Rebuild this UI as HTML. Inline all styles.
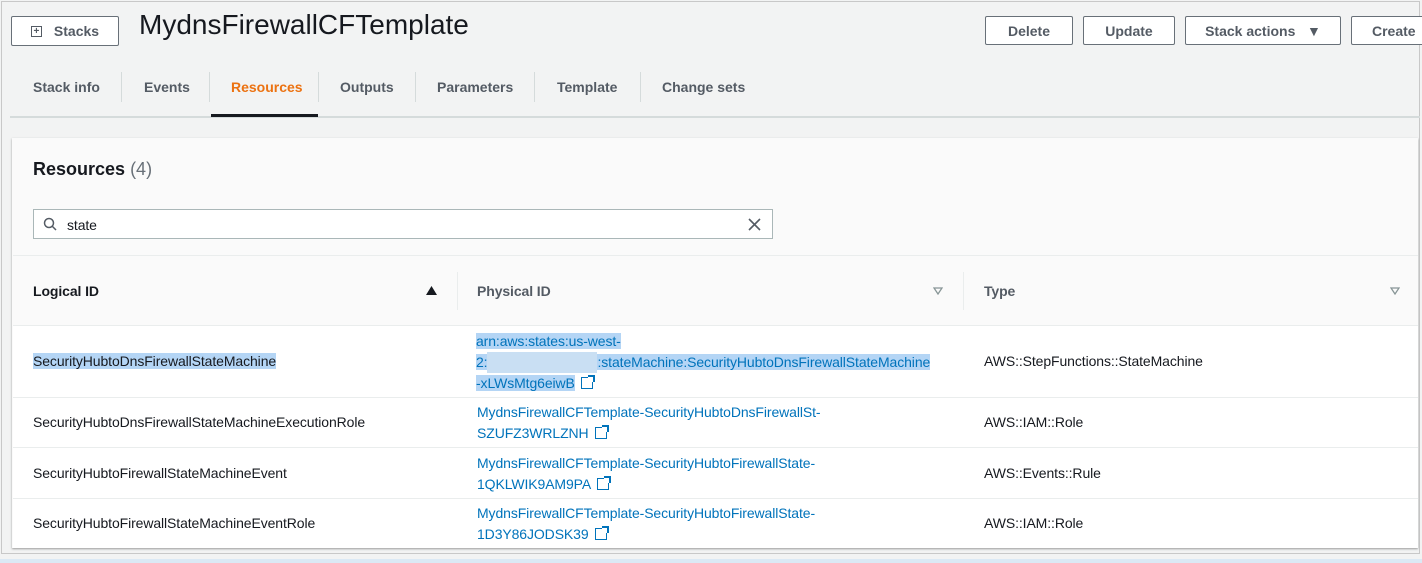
<!DOCTYPE html><html><head><style>
body{margin:0;width:1422px;height:563px;background:#f2f3f3;font-family:"Liberation Sans",sans-serif;color:#16191f;position:relative;overflow:hidden}
.a{position:absolute}
.btn{position:absolute;top:16px;height:29px;border:1px solid #687078;border-radius:2px;background:#fff;font-weight:bold;font-size:14px;color:#545b64;box-sizing:border-box;display:flex;align-items:center;justify-content:center}
.tab{position:absolute;top:79px;font-size:14px;font-weight:bold;color:#545b64}
.sep{position:absolute;top:72px;width:1px;height:30px;background:#d5dbdb}
.t{position:absolute;font-size:14px;color:#16191f;letter-spacing:-0.1px}
.l{position:absolute;font-size:14px;color:#0073bb;line-height:21px;letter-spacing:-0.1px}
.hl{background:#b4d5f5}
.ext{display:inline-block;width:10px;height:10px;border:1.5px solid #0073bb;margin-left:6px;vertical-align:-1px;position:relative}
.ext:after{content:"";position:absolute;right:-3px;top:-3px;width:7px;height:7px;background:#fff;border-top:2px solid #0073bb;border-right:2px solid #0073bb;box-sizing:border-box}
.rl{position:absolute;left:13px;width:1405px;height:1px;background:#eaeded}
</style></head><body>
<div class="a" style="left:1px;top:1px;width:1419px;height:553px;border:1px solid #c8c8c8;box-sizing:border-box"></div>
<div class="btn" style="left:11px;width:108px;height:30px;top:16px"><span style="display:inline-block;width:9px;height:9px;border:1.5px solid #545b64;font-size:10px;line-height:9px;text-align:center;margin-right:12px">+</span>Stacks</div>
<div class="a" style="left:139px;top:9px;font-size:28px;color:#16191f">MydnsFirewallCFTemplate</div>
<div class="btn" style="left:985px;width:88px">Delete</div>
<div class="btn" style="left:1083px;width:92px">Update</div>
<div class="btn" style="left:1185px;width:156px">Stack actions &nbsp;&nbsp;▼</div>
<div class="btn" style="left:1351px;width:90px;justify-content:flex-start;padding-left:20px">Create</div>
<div class="tab" style="left:33px">Stack info</div><div class="sep" style="left:121px"></div>
<div class="tab" style="left:144px">Events</div><div class="sep" style="left:209px"></div>
<div class="tab" style="left:231px;color:#ec7211">Resources</div><div class="sep" style="left:318px"></div>
<div class="tab" style="left:340px">Outputs</div><div class="sep" style="left:415px"></div>
<div class="tab" style="left:437px">Parameters</div><div class="sep" style="left:534px"></div>
<div class="tab" style="left:557px">Template</div><div class="sep" style="left:640px"></div>
<div class="tab" style="left:662px">Change sets</div>
<div class="a" style="left:10px;top:116px;width:1410px;height:2px;background:#d5dbdb"></div>
<div class="a" style="left:211px;top:114px;width:107px;height:3px;background:#16191f"></div>
<div class="a" style="left:12px;top:138px;width:1406px;height:410px;background:#fafafa;box-shadow:0 1px 2px #999"></div>
<div class="a" style="left:33px;top:159px;font-size:18px;font-weight:bold">Resources <span style="font-weight:normal;color:#687078">(4)</span></div>
<div class="a" style="left:33px;top:209px;width:740px;height:30px;background:#fff;border:1px solid #aab7b8;box-sizing:border-box"></div>
<svg class="a" style="left:43px;top:217px" width="14" height="14"><circle cx="6" cy="6" r="4.5" fill="none" stroke="#545b64" stroke-width="1.5"/><line x1="9" y1="9" x2="13" y2="13" stroke="#545b64" stroke-width="1.5"/></svg>
<div class="t" style="left:67px;top:217px;font-size:14px">state</div>
<svg class="a" style="left:748px;top:218px" width="13" height="13"><path d="M1 1L12 12M12 1L1 12" stroke="#545b64" stroke-width="1.6"/></svg>
<div class="rl" style="top:255px"></div>
<div class="t" style="left:33px;top:283px;font-weight:bold">Logical ID</div>
<svg class="a" style="left:426px;top:286px" width="11" height="9"><path d="M0 9L5.5 0L11 9Z" fill="#16191f"/></svg>
<div class="a" style="left:457px;top:272px;width:1px;height:38px;background:#eaeded"></div>
<div class="t" style="left:477px;top:283px;font-weight:bold;color:#545b64">Physical ID</div>
<svg class="a" style="left:933px;top:287px" width="10" height="8"><path d="M1 1H9L5 7Z" fill="none" stroke="#879596" stroke-width="1.3"/></svg>
<div class="a" style="left:963px;top:272px;width:1px;height:38px;background:#eaeded"></div>
<div class="t" style="left:984px;top:283px;font-weight:bold;color:#545b64">Type</div>
<svg class="a" style="left:1390px;top:287px" width="10" height="8"><path d="M1 1H9L5 7Z" fill="none" stroke="#879596" stroke-width="1.3"/></svg>
<div class="a" style="left:13px;top:325px;width:1405px;height:223px;background:#fff"></div>
<div class="rl" style="top:325px"></div><div class="rl" style="top:397px"></div><div class="rl" style="top:447px"></div><div class="rl" style="top:498px"></div>
<div class="t" style="left:33px;top:353px"><span class="hl">SecurityHubtoDnsFirewallStateMachine</span></div>
<div class="l" style="left:476px;top:331px;width:480px"><span class="hl">arn:aws:states:us-west-</span><br><span class="hl">2:<span style="display:inline-block;width:110px;background:#c9dff3;color:transparent">x</span>:stateMachine:SecurityHubtoDnsFirewallStateMachine</span><br><span class="hl">-xLWsMtg6eiwB</span><span class="ext"></span></div>
<div class="t" style="left:984px;top:353px">AWS::StepFunctions::StateMachine</div>
<div class="t" style="left:33px;top:414px">SecurityHubtoDnsFirewallStateMachineExecutionRole</div>
<div class="l" style="left:477px;top:402px">MydnsFirewallCFTemplate-SecurityHubtoDnsFirewallSt-<br>SZUFZ3WRLZNH<span class="ext"></span></div>
<div class="t" style="left:984px;top:414px">AWS::IAM::Role</div>
<div class="t" style="left:33px;top:465px">SecurityHubtoFirewallStateMachineEvent</div>
<div class="l" style="left:477px;top:453px">MydnsFirewallCFTemplate-SecurityHubtoFirewallState-<br>1QKLWIK9AM9PA<span class="ext"></span></div>
<div class="t" style="left:984px;top:465px">AWS::Events::Rule</div>
<div class="t" style="left:33px;top:515px">SecurityHubtoFirewallStateMachineEventRole</div>
<div class="l" style="left:477px;top:503px">MydnsFirewallCFTemplate-SecurityHubtoFirewallState-<br>1D3Y86JODSK39<span class="ext"></span></div>
<div class="t" style="left:984px;top:515px">AWS::IAM::Role</div>
<div class="a" style="left:0;top:559px;width:1422px;height:4px;background:#dbe9f5"></div>
</body></html>
